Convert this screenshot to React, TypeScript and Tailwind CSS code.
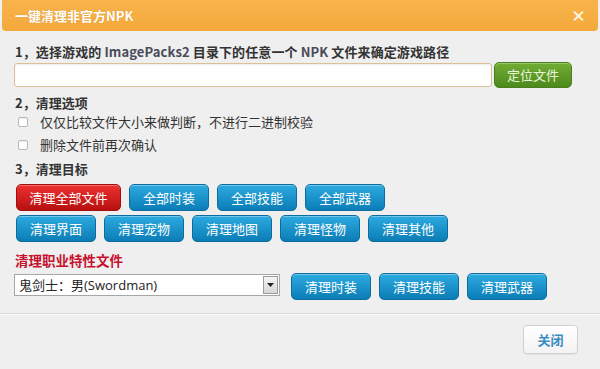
import React from "react";

const cjk = { fontFamily: '"Noto Sans CJK SC", "Noto Sans", sans-serif' };

function BlueBtn({ label, wide }: { label: string; wide?: boolean }) {
  return (
    <button
      className={`h-[27px] ${wide ? "w-[105px]" : "w-[80px]"} rounded-[5px] border border-[#0b6d9f] bg-gradient-to-b from-[#2cabe0] to-[#0a7db6] text-[13px] text-white shadow-[inset_0_1px_0_rgba(255,255,255,0.35)]`}
      style={cjk}
    >
      {label}
    </button>
  );
}

function Checkbox({ label }: { label: string }) {
  return (
    <div className="flex h-[18px] items-center">
      <span className="ml-[4px] h-[10px] w-[10px] rounded-[2px] border border-[#b9b9b9] bg-white shadow-[inset_0_1px_1px_rgba(0,0,0,0.08)]" />
      <span className="ml-[12px] text-[13px] text-[#333]">{label}</span>
    </div>
  );
}

export default function App() {
  return (
    <div className="h-[369px] w-[600px] overflow-hidden bg-[#efefef]" style={cjk}>
      {/* header */}
      <div className="mx-[2px] flex h-[31px] items-center justify-between rounded-b-[4px] bg-gradient-to-b from-[#f8b44c] to-[#f4a839] pl-[13px] pr-[12px]">
        <span className="text-[13px] font-bold text-white [text-shadow:0_0_1px_rgba(160,90,0,0.4)]">一键清理非官方NPK</span>
        <span className="text-[15px] font-black leading-none text-[#fff6e6]">×</span>
      </div>

      <div className="px-[14px]">
        <div className="mt-[13px] h-[16px] pl-[1px] text-[13px] font-bold leading-[16px] tracking-[0.1px] text-[#333]">
          1，选择游戏的 <span className="text-[#4a4a5a]">ImagePacks2</span> 目录下的任意一个 <span className="text-[#4a4a5a]">NPK</span> 文件来确定游戏路径
        </div>

        <div className="mt-[2px] flex h-[26px] items-center gap-[2px]">
          <div className="h-[24px] w-[478px] rounded-[3px] border border-[#dcc095] bg-white shadow-[inset_0_1px_2px_rgba(0,0,0,0.08)]" />
          <button className="h-[26px] w-[78px] rounded-[5px] border border-[#4a7f1c] bg-gradient-to-b from-[#72ad33] to-[#4c8a1d] text-[13px] text-[#eaf6dc] shadow-[inset_0_1px_0_rgba(255,255,255,0.3)]">
            定位文件
          </button>
        </div>

        <div className="mt-[7px] h-[16px] pl-[1px] text-[13px] font-bold leading-[16px] text-[#333]">2，清理选项</div>
        <div className="mt-[2px]">
          <Checkbox label="仅仅比较文件大小来做判断，不进行二进制校验" />
        </div>
        <div className="mt-[5px]">
          <Checkbox label="删除文件前再次确认" />
        </div>

        <div className="mt-[7px] h-[16px] pl-[1px] text-[13px] font-bold leading-[16px] text-[#333]">3，清理目标</div>

        <div className="ml-[2px] mt-[7px] flex gap-[8px]">
          <button
            className="h-[27px] w-[105px] rounded-[5px] border border-[#a30d0d] bg-gradient-to-b from-[#ee3030] to-[#b70f0f] text-[13px] text-white shadow-[inset_0_1px_0_rgba(255,255,255,0.3)]"
            style={cjk}
          >
            清理全部文件
          </button>
          <BlueBtn label="全部时装" />
          <BlueBtn label="全部技能" />
          <BlueBtn label="全部武器" />
        </div>
        <div className="ml-[2px] mt-[4px] flex gap-[8px]">
          <BlueBtn label="清理界面" />
          <BlueBtn label="清理宠物" />
          <BlueBtn label="清理地图" />
          <BlueBtn label="清理怪物" />
          <BlueBtn label="清理其他" />
        </div>

        <div className="mt-[10px] h-[16px] pl-[1px] text-[13.5px] font-bold leading-[16px] text-[#c8102e]">清理职业特性文件</div>

        <div className="mt-[5px] flex items-start">
          <div className="mt-[1px] flex h-[22px] w-[266px] items-center border border-[#a7a7a7] bg-white">
            <span className="flex-1 pl-[4px] text-[13px] leading-none text-[#222]">
              鬼剑士：男<span style={{ fontFamily: '"Open Sans", "Noto Sans", sans-serif' }}>(Swordman)</span>
            </span>
            <span className="mr-[1px] flex h-[18px] w-[15px] items-center justify-center border border-[#9c9c9c] bg-gradient-to-b from-[#f4f4f4] to-[#d6d6d6]">
              <svg width="7" height="4" viewBox="0 0 7 4">
                <path d="M0 0h7L3.5 4z" fill="#222" />
              </svg>
            </span>
          </div>
          <div className="ml-[11px] flex gap-[8px]">
            <BlueBtn label="清理时装" />
            <BlueBtn label="清理技能" />
            <BlueBtn label="清理武器" />
          </div>
        </div>
      </div>

      <div className="mt-[13px] border-t border-[#dcdcdc] shadow-[0_1px_0_#fafafa]" />

      <div className="flex justify-end pr-[22px] pt-[11px]">
        <button
          className="h-[29px] w-[55px] rounded-[4px] border border-[#d0d0d0] bg-gradient-to-b from-white to-[#f3f3f3] text-[13px] font-bold text-[#3a8cc2] shadow-[0_1px_1px_rgba(0,0,0,0.06)]"
          style={cjk}
        >
          关闭
        </button>
      </div>
    </div>
  );
}
